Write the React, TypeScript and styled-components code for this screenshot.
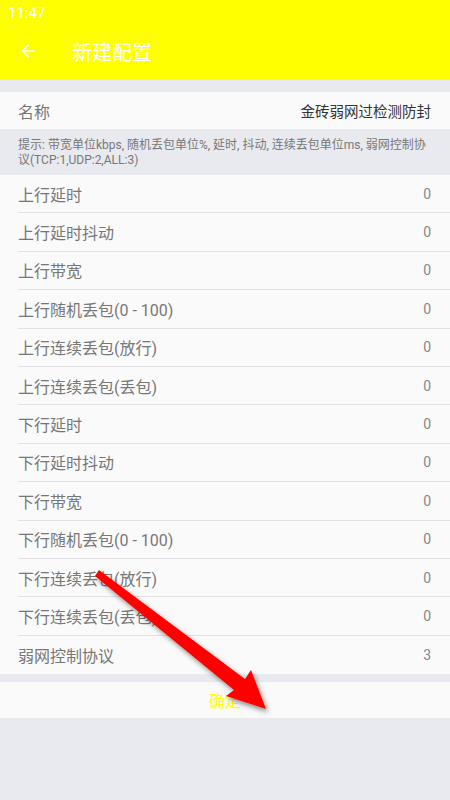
import React from 'react';
import styled, { createGlobalStyle } from 'styled-components';

const GlobalStyle = createGlobalStyle`
  html, body {
    margin: 0;
    padding: 0;
    background: #e9eaef;
    font-family: Roboto, 'Noto Sans CJK SC', sans-serif;
  }
`;

const Screen = styled.div`
  position: relative;
  width: 450px;
  height: 800px;
  background: #e9eaef;
  overflow: hidden;
`;

const Header = styled.div`
  background: #ffff00;
  height: 80px;
  display: flex;
  flex-direction: column;
`;

const StatusBar = styled.div`
  height: 26px;
  padding-left: 8px;
  display: flex;
  align-items: center;
  color: #fff;
  font-size: 15px;
`;

const Toolbar = styled.div`
  flex: 1;
  display: flex;
  align-items: center;
  padding-left: 18px;
  gap: 34px;
  padding-bottom: 4px;
  color: #fff;
`;

const Title = styled.div`
  font-size: 20px;
`;

const Section = styled.div<{ $top?: number }>`
  background: #fafafa;
  margin-top: ${({ $top }) => $top ?? 0}px;
`;

const Row = styled.div<{ $last?: boolean }>`
  height: 38.4px;
  box-sizing: border-box;
  margin-left: 18px;
  padding-right: 19px;
  display: flex;
  align-items: center;
  justify-content: space-between;
  border-bottom: ${({ $last }) => ($last ? 'none' : '1.5px solid #e2e2e4')};
`;

const NameRow = styled(Row)`
  height: 37px;
`;

const Label = styled.span`
  font-size: 16px;
  color: #777;
`;

const Value = styled.span<{ $dark?: boolean }>`
  font-size: ${({ $dark }) => ($dark ? 14.5 : 14)}px;
  color: ${({ $dark }) => ($dark ? '#333' : '#888')};
`;

const Hint = styled.div`
  padding: 9px 18px 7px 18px;
  font-size: 12px;
  line-height: 15px;
  color: #777;
`;

const Confirm = styled.div`
  margin-top: 8px;
  height: 36px;
  background: #fafafa;
  display: flex;
  align-items: center;
  justify-content: center;
  color: #ffff00;
  font-size: 16px;
`;

const ArrowLayer = styled.svg`
  position: absolute;
  left: 0;
  top: 0;
  pointer-events: none;
`;

const rows: [string, string][] = [
  ['上行延时', '0'],
  ['上行延时抖动', '0'],
  ['上行带宽', '0'],
  ['上行随机丢包(0 - 100)', '0'],
  ['上行连续丢包(放行)', '0'],
  ['上行连续丢包(丢包)', '0'],
  ['下行延时', '0'],
  ['下行延时抖动', '0'],
  ['下行带宽', '0'],
  ['下行随机丢包(0 - 100)', '0'],
  ['下行连续丢包(放行)', '0'],
  ['下行连续丢包(丢包)', '0'],
  ['弱网控制协议', '3'],
];

const App: React.FC = () => (
  <Screen>
    <GlobalStyle />
    <Header>
      <StatusBar>11:47</StatusBar>
      <Toolbar>
        <svg width="20" height="20" viewBox="0 0 24 24">
          <path d="M20 11H7.83l5.59-5.59L12 4l-8 8 8 8 1.41-1.41L7.83 13H20v-2z" fill="#fff" />
        </svg>
        <Title>新建配置</Title>
      </Toolbar>
    </Header>
    <Section $top={12}>
      <NameRow $last>
        <Label>名称</Label>
        <Value $dark>金砖弱网过检测防封</Value>
      </NameRow>
    </Section>
    <Hint>
      提示: 带宽单位kbps, 随机丢包单位%, 延时, 抖动, 连续丢包单位ms, 弱网控制协议(TCP:1,UDP:2,ALL:3)
    </Hint>
    <Section>
      {rows.map(([label, value], i) => (
        <Row key={label} $last={i === rows.length - 1}>
          <Label>{label}</Label>
          <Value>{value}</Value>
        </Row>
      ))}
    </Section>
    <Confirm>确定</Confirm>
    <ArrowLayer width="450" height="800">
      <defs>
        <filter id="shadow" x="-20%" y="-20%" width="140%" height="140%">
          <feDropShadow dx="2" dy="3" stdDeviation="2.5" floodColor="#000" floodOpacity="0.45" />
        </filter>
      </defs>
      <polygon
        points="95,576 99,570 245,679 251,670 266,709 226,696 234,690"
        fill="#ff0000"
        filter="url(#shadow)"
      />
    </ArrowLayer>
  </Screen>
);

export default App;
